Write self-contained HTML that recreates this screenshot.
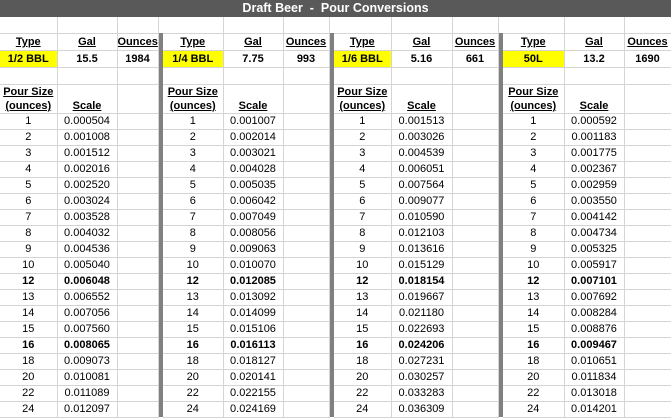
<!DOCTYPE html>
<html><head><meta charset="utf-8"><style>
body{margin:0;width:671px;height:417px;overflow:hidden;background:#fff;font-family:"Liberation Sans",Arial,sans-serif;font-size:11px;color:#000;position:relative}
.title{position:absolute;left:0;top:0;width:671px;height:17px;background:#595959;color:#fff;font-weight:bold;font-size:12.5px;text-align:center;line-height:17px}
table{position:absolute;top:17px;border-collapse:collapse;table-layout:fixed}
td{border-right:1px solid #d4d4d4;border-bottom:1px solid #d4d4d4;text-align:center;padding:0;height:15px;line-height:15px;white-space:nowrap;overflow:hidden}
tr.h td{height:16px;line-height:16px}
.u{font-weight:bold;text-decoration:underline}
.y{background:#ffff00}
b{font-weight:bold}
tr.ps td{height:28px;vertical-align:bottom;line-height:14px}
tr.d td{height:15px}
tr.b td{font-weight:bold}
.sep{position:absolute;top:33px;width:4px;height:384px;background:#808080}
</style></head><body>
<div class="title">Draft Beer&nbsp; - &nbsp;Pour Conversions</div>

<table style="left:0;width:158px"><colgroup><col style="width:57px"><col style="width:60px"><col style="width:41px"></colgroup>
<tr class="h"><td></td><td></td><td></td></tr>
<tr class="h"><td class="u">Type</td><td class="u">Gal</td><td class="u">Ounces</td></tr>
<tr class="h"><td class="y"><b>1/2 BBL</b></td><td><b>15.5</b></td><td><b>1984</b></td></tr>
<tr class="h"><td></td><td></td><td></td></tr>
<tr class="ps"><td class="u">Pour Size<br>(ounces)</td><td class="u">Scale</td><td></td></tr>
<tr class="d"><td>1</td><td>0.000504</td><td></td></tr>
<tr class="d"><td>2</td><td>0.001008</td><td></td></tr>
<tr class="d"><td>3</td><td>0.001512</td><td></td></tr>
<tr class="d"><td>4</td><td>0.002016</td><td></td></tr>
<tr class="d"><td>5</td><td>0.002520</td><td></td></tr>
<tr class="d"><td>6</td><td>0.003024</td><td></td></tr>
<tr class="d"><td>7</td><td>0.003528</td><td></td></tr>
<tr class="d"><td>8</td><td>0.004032</td><td></td></tr>
<tr class="d"><td>9</td><td>0.004536</td><td></td></tr>
<tr class="d"><td>10</td><td>0.005040</td><td></td></tr>
<tr class="d b"><td>12</td><td>0.006048</td><td></td></tr>
<tr class="d"><td>13</td><td>0.006552</td><td></td></tr>
<tr class="d"><td>14</td><td>0.007056</td><td></td></tr>
<tr class="d"><td>15</td><td>0.007560</td><td></td></tr>
<tr class="d b"><td>16</td><td>0.008065</td><td></td></tr>
<tr class="d"><td>18</td><td>0.009073</td><td></td></tr>
<tr class="d"><td>20</td><td>0.010081</td><td></td></tr>
<tr class="d"><td>22</td><td>0.011089</td><td></td></tr>
<tr class="d"><td>24</td><td>0.012097</td><td></td></tr>
</table>

<table style="left:163px;width:166px"><colgroup><col style="width:60px"><col style="width:60px"><col style="width:46px"></colgroup>
<tr class="h"><td></td><td></td><td></td></tr>
<tr class="h"><td class="u">Type</td><td class="u">Gal</td><td class="u">Ounces</td></tr>
<tr class="h"><td class="y"><b>1/4 BBL</b></td><td><b>7.75</b></td><td><b>993</b></td></tr>
<tr class="h"><td></td><td></td><td></td></tr>
<tr class="ps"><td class="u">Pour Size<br>(ounces)</td><td class="u">Scale</td><td></td></tr>
<tr class="d"><td>1</td><td>0.001007</td><td></td></tr>
<tr class="d"><td>2</td><td>0.002014</td><td></td></tr>
<tr class="d"><td>3</td><td>0.003021</td><td></td></tr>
<tr class="d"><td>4</td><td>0.004028</td><td></td></tr>
<tr class="d"><td>5</td><td>0.005035</td><td></td></tr>
<tr class="d"><td>6</td><td>0.006042</td><td></td></tr>
<tr class="d"><td>7</td><td>0.007049</td><td></td></tr>
<tr class="d"><td>8</td><td>0.008056</td><td></td></tr>
<tr class="d"><td>9</td><td>0.009063</td><td></td></tr>
<tr class="d"><td>10</td><td>0.010070</td><td></td></tr>
<tr class="d b"><td>12</td><td>0.012085</td><td></td></tr>
<tr class="d"><td>13</td><td>0.013092</td><td></td></tr>
<tr class="d"><td>14</td><td>0.014099</td><td></td></tr>
<tr class="d"><td>15</td><td>0.015106</td><td></td></tr>
<tr class="d b"><td>16</td><td>0.016113</td><td></td></tr>
<tr class="d"><td>18</td><td>0.018127</td><td></td></tr>
<tr class="d"><td>20</td><td>0.020141</td><td></td></tr>
<tr class="d"><td>22</td><td>0.022155</td><td></td></tr>
<tr class="d"><td>24</td><td>0.024169</td><td></td></tr>
</table>

<table style="left:334px;width:164px"><colgroup><col style="width:57px"><col style="width:61px"><col style="width:46px"></colgroup>
<tr class="h"><td></td><td></td><td></td></tr>
<tr class="h"><td class="u">Type</td><td class="u">Gal</td><td class="u">Ounces</td></tr>
<tr class="h"><td class="y"><b>1/6 BBL</b></td><td><b>5.16</b></td><td><b>661</b></td></tr>
<tr class="h"><td></td><td></td><td></td></tr>
<tr class="ps"><td class="u">Pour Size<br>(ounces)</td><td class="u">Scale</td><td></td></tr>
<tr class="d"><td>1</td><td>0.001513</td><td></td></tr>
<tr class="d"><td>2</td><td>0.003026</td><td></td></tr>
<tr class="d"><td>3</td><td>0.004539</td><td></td></tr>
<tr class="d"><td>4</td><td>0.006051</td><td></td></tr>
<tr class="d"><td>5</td><td>0.007564</td><td></td></tr>
<tr class="d"><td>6</td><td>0.009077</td><td></td></tr>
<tr class="d"><td>7</td><td>0.010590</td><td></td></tr>
<tr class="d"><td>8</td><td>0.012103</td><td></td></tr>
<tr class="d"><td>9</td><td>0.013616</td><td></td></tr>
<tr class="d"><td>10</td><td>0.015129</td><td></td></tr>
<tr class="d b"><td>12</td><td>0.018154</td><td></td></tr>
<tr class="d"><td>13</td><td>0.019667</td><td></td></tr>
<tr class="d"><td>14</td><td>0.021180</td><td></td></tr>
<tr class="d"><td>15</td><td>0.022693</td><td></td></tr>
<tr class="d b"><td>16</td><td>0.024206</td><td></td></tr>
<tr class="d"><td>18</td><td>0.027231</td><td></td></tr>
<tr class="d"><td>20</td><td>0.030257</td><td></td></tr>
<tr class="d"><td>22</td><td>0.033283</td><td></td></tr>
<tr class="d"><td>24</td><td>0.036309</td><td></td></tr>
</table>

<table style="left:503px;width:168px"><colgroup><col style="width:61px"><col style="width:60px"><col style="width:47px"></colgroup>
<tr class="h"><td></td><td></td><td></td></tr>
<tr class="h"><td class="u">Type</td><td class="u">Gal</td><td class="u">Ounces</td></tr>
<tr class="h"><td class="y"><b>50L</b></td><td><b>13.2</b></td><td><b>1690</b></td></tr>
<tr class="h"><td></td><td></td><td></td></tr>
<tr class="ps"><td class="u">Pour Size<br>(ounces)</td><td class="u">Scale</td><td></td></tr>
<tr class="d"><td>1</td><td>0.000592</td><td></td></tr>
<tr class="d"><td>2</td><td>0.001183</td><td></td></tr>
<tr class="d"><td>3</td><td>0.001775</td><td></td></tr>
<tr class="d"><td>4</td><td>0.002367</td><td></td></tr>
<tr class="d"><td>5</td><td>0.002959</td><td></td></tr>
<tr class="d"><td>6</td><td>0.003550</td><td></td></tr>
<tr class="d"><td>7</td><td>0.004142</td><td></td></tr>
<tr class="d"><td>8</td><td>0.004734</td><td></td></tr>
<tr class="d"><td>9</td><td>0.005325</td><td></td></tr>
<tr class="d"><td>10</td><td>0.005917</td><td></td></tr>
<tr class="d b"><td>12</td><td>0.007101</td><td></td></tr>
<tr class="d"><td>13</td><td>0.007692</td><td></td></tr>
<tr class="d"><td>14</td><td>0.008284</td><td></td></tr>
<tr class="d"><td>15</td><td>0.008876</td><td></td></tr>
<tr class="d b"><td>16</td><td>0.009467</td><td></td></tr>
<tr class="d"><td>18</td><td>0.010651</td><td></td></tr>
<tr class="d"><td>20</td><td>0.011834</td><td></td></tr>
<tr class="d"><td>22</td><td>0.013018</td><td></td></tr>
<tr class="d"><td>24</td><td>0.014201</td><td></td></tr>
</table>

<div class="sep" style="left:159px"></div>
<div class="sep" style="left:330px"></div>
<div class="sep" style="left:499px"></div>
</body></html>
